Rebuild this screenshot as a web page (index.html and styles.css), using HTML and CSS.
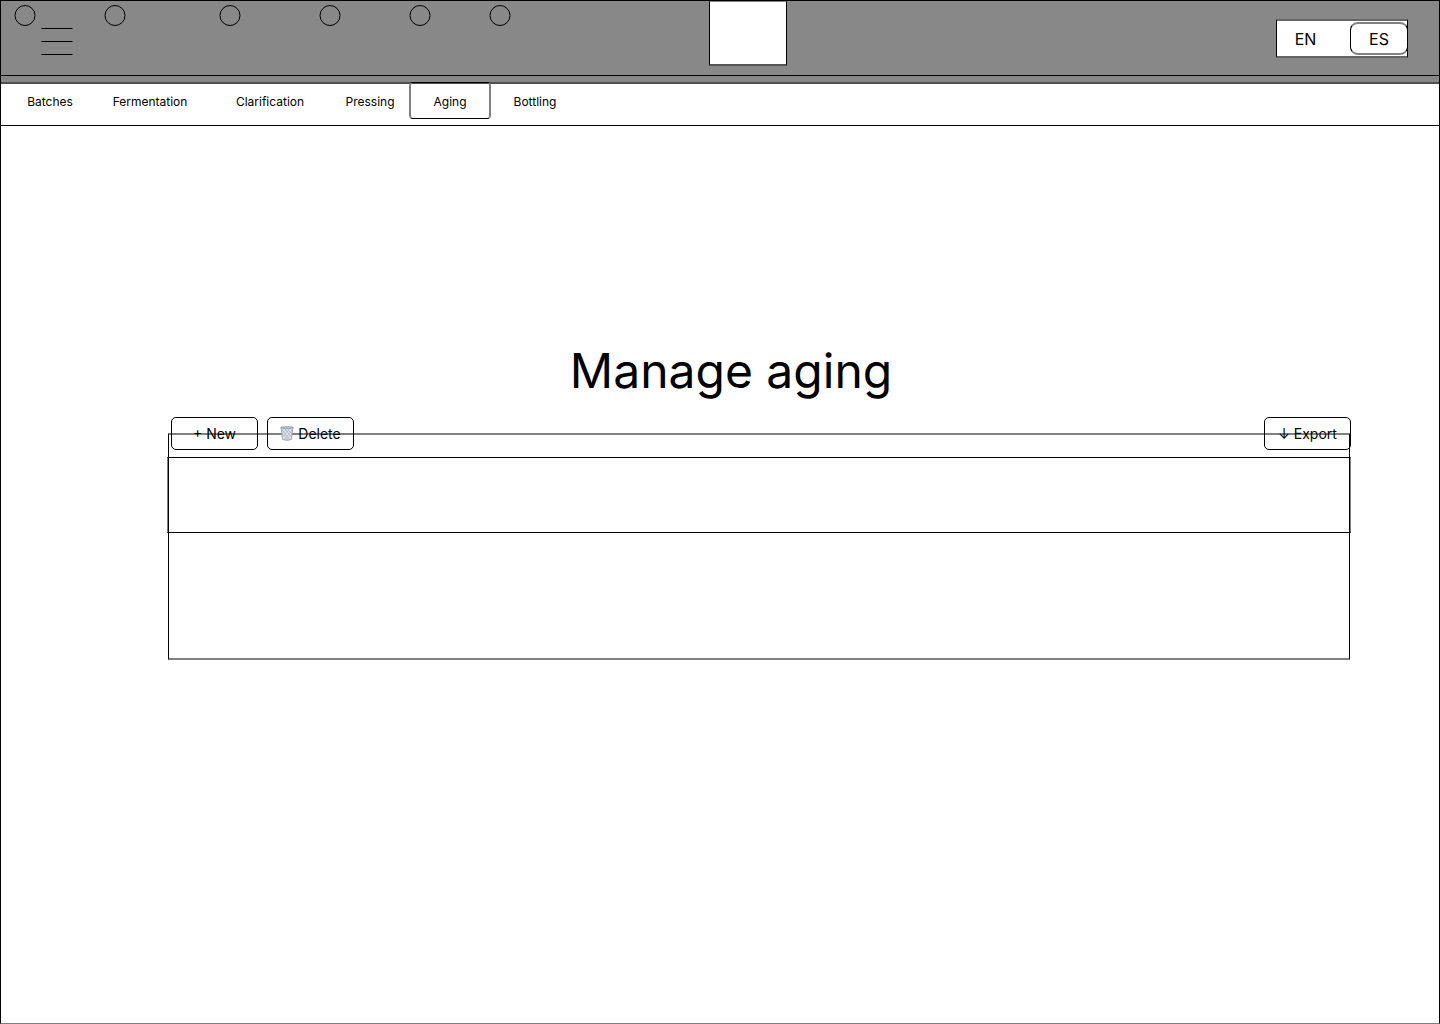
FILE: index.html
```html
<!DOCTYPE html>
<html lang="en">
<head>
  <meta charset="utf-8">
  <meta name="viewport" content="width=device-width, initial-scale=1">
  <title>Manage aging</title>
  <link rel="stylesheet" href="styles.css">
</head>
<body>
  <div class="page">
    <header class="topbar">
      <button class="menu" type="button" aria-label="Menu">
        <svg width="32" height="27" viewBox="0 0 32 27" stroke="#000" aria-hidden="true">
          <path d="M.5 .5h31M.5 13.5h31M.5 26.5h31"/>
        </svg>
      </button>
      <div class="logo"></div>
      <div class="lang">
        <button class="lang-option" type="button">EN</button>
        <button class="lang-option lang-current" type="button" aria-pressed="true">ES</button>
      </div>
    </header>
    <div class="band"></div>
    <nav class="tabs">
      <a class="tab tab-small" href="#"><svg class="dot" viewBox="0 0 22 22" aria-hidden="true"><circle cx="11" cy="11.5" r="10"/></svg>Batches</a>
      <a class="tab tab-medium" href="#"><svg class="dot" viewBox="0 0 22 22" aria-hidden="true"><circle cx="11" cy="11.5" r="10"/></svg>Fermentation</a>
      <a class="tab tab-large" href="#"><svg class="dot" viewBox="0 0 22 22" aria-hidden="true"><circle cx="11" cy="11.5" r="10"/></svg>Clarification</a>
      <a class="tab tab-large" href="#"><svg class="dot" viewBox="0 0 22 22" aria-hidden="true"><circle cx="11" cy="11.5" r="10"/></svg>Pressing</a>
      <a class="tab tab-current" href="#" aria-current="page"><svg class="dot" viewBox="0 0 22 22" aria-hidden="true"><circle cx="11" cy="11.5" r="10"/></svg>Aging</a>
      <a class="tab tab-medium" href="#"><svg class="dot" viewBox="0 0 22 22" aria-hidden="true"><circle cx="11" cy="11.5" r="10"/></svg>Bottling</a>
    </nav>
    <main class="main">
      <h1 class="title">Manage aging</h1>
      <section class="content">
        <div class="toolbar">
          <button class="action" type="button">+ New</button>
          <button class="action" type="button">
            <svg class="bin" viewBox="0 0 14 16" aria-hidden="true">
              <path d="M1 1.500 2.600 13.500Q7 15.200 11.400 13.500L13 1.500Z" fill="#e3e7ec" stroke="#8d98a5" stroke-width=".8"/>
              <path d="M2 4l8 10M2.500 8l5 6M4 2l7.500 9M7 2l5 6M10 2l2.500 3M12 4l-8 10M11.500 8l-5 6M10 2l-7.500 9M7 2L2 8M4 2L2 5" fill="none" stroke="#8f9aa6" stroke-width=".5"/>
              <ellipse cx="7" cy="1.500" rx="6.300" ry=".8" fill="#d5dae0" stroke="#77838f" stroke-width=".7"/>
            </svg>
            Delete
          </button>
          <button class="action action-end" type="button">↓ Export</button>
        </div>
        <div class="panel">
          <div class="panel-head"></div>
        </div>
      </section>
    </main>
  </div>
</body>
</html>
```
FILE: styles.css
```css
* {
  box-sizing: border-box;
}

body {
  margin: 0;
  background: #fff;
  color: #000;
  font-family: Inter, "Liberation Sans", sans-serif;
}

button {
  margin: 0;
  padding: 0;
  border: 0;
  background: transparent;
  color: inherit;
  font: inherit;
}

.page {
  display: flex;
  flex-direction: column;
  min-height: 100vh;
  border: 1px solid #000;
  border-bottom-color: #808080;
}

.topbar {
  display: grid;
  grid-template-columns: 1fr auto 1fr;
  align-items: start;
  height: 75px;
  padding: 0 31px 0 40px;
  border-bottom: 1px solid #000;
  background: #888;
}

.menu {
  justify-self: start;
  margin-top: 27px;
}

.menu svg {
  display: block;
}

.logo {
  width: 78px;
  height: 65px;
  margin-left: 47px;
  border: 1px solid #000;
  border-top-color: #808080;
  border-bottom: 2px solid #555;
  background: #fff;
}

.lang {
  display: flex;
  justify-self: end;
  align-items: center;
  gap: 16px;
  width: 132px;
  height: 39px;
  margin-top: 18px;
  border: 1px solid #000;
  border-top: 2px solid #666;
  border-bottom: 2px solid #666;
  background: #fff;
}

.lang-option {
  flex: none;
  width: 57px;
  height: 33px;
  font-size: 16px;
  line-height: 20px;
}

.lang-current {
  width: 58px;
  border: 1px solid #000;
  border-top: 2px solid #808080;
  border-bottom: 2px solid #808080;
  border-radius: 8px;
}

.band {
  height: 8px;
  border-bottom: 2px solid #505050;
  background: #888;
}

.tabs {
  display: grid;
  grid-template-columns: 90px 115px 100px 90px 80px 90px;
  height: 42px;
  padding-left: 14px;
  border-bottom: 1px solid #000;
}

.tab {
  position: relative;
  display: flex;
  align-items: center;
  justify-content: center;
  height: 37px;
  margin-top: -2px;
  padding-top: 2px;
  color: inherit;
  font-size: 12px;
  line-height: 16px;
  text-decoration: none;
}

.tab-small {
  width: 70px;
}

.tab-medium {
  width: 90px;
}

.tab-large {
  width: 100px;
}

.tab-current {
  width: 82px;
  margin-left: -1px;
  border: 1px solid #000;
  border-right: 2px solid #808080;
  border-left: 2px solid #808080;
  border-radius: 4px;
}

.dot {
  position: absolute;
  top: -78px;
  left: -1px;
  width: 22px;
  height: 22px;
  overflow: visible;
  fill: none;
  stroke: #000;
}

.tab-current .dot {
  top: -79px;
  left: -2px;
}

.main {
  padding: 216px 89px 0 167px;
}

.title {
  margin: 0 22px 17px -34px;
  font-size: 48px;
  font-weight: 400;
  line-height: 58px;
  text-align: center;
}

.toolbar {
  display: flex;
  gap: 9px;
  margin: 0 -1px -17px 3px;
}

.action {
  display: flex;
  align-items: center;
  justify-content: center;
  gap: 4px;
  width: 87px;
  height: 33px;
  border: 1px solid #000;
  border-radius: 5px;
  font-size: 14px;
  line-height: 18px;
}

.action-end {
  margin-left: auto;
}

.bin {
  width: 14px;
  height: 16px;
}

.panel {
  height: 227px;
  padding-top: 22px;
  border: 1px solid #000;
  border-top: 2px solid #808080;
  border-bottom: 2px solid #808080;
}

.panel-head {
  height: 76px;
  margin: 0 -2px;
  border: 1px solid #000;
  border-right-color: #808080;
  border-left-color: #808080;
}
```
